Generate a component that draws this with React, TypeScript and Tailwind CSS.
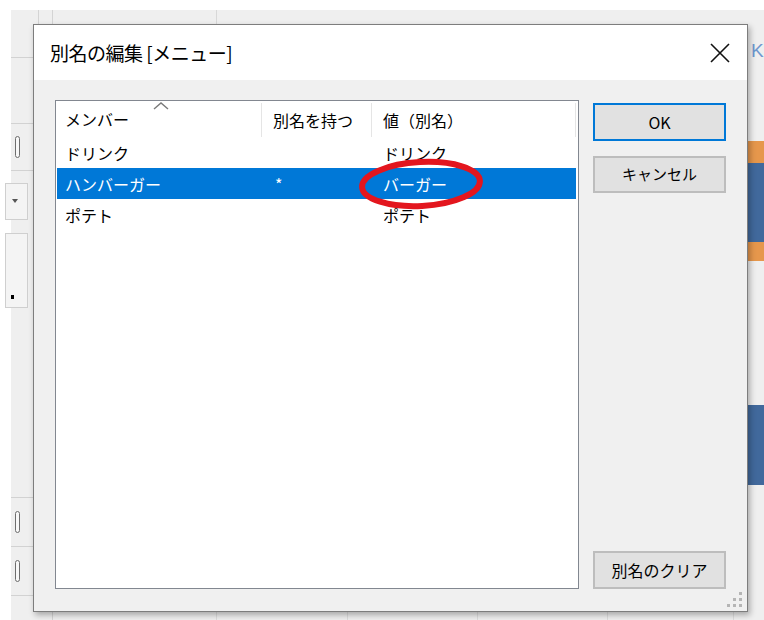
import React from "react";

const rows = [
  { name: "ドリンク", has: "", alias: "ドリンク", sel: false },
  { name: "ハンバーガー", has: "*", alias: "バーガー", sel: true },
  { name: "ポテト", has: "", alias: "ポテト", sel: false },
];

function Handle() {
  return <div className="ml-[4px] w-[5px] h-[22px] rounded-[3px] border border-[#6e6e6e] bg-[#f7f7f7]" />;
}

function LeftPanel() {
  return (
    <div className="w-[22px] flex flex-col">
      <div className="h-[48px] border-b border-[#d2d2d2]" />
      <div className="h-[66px] border-b border-[#d2d2d2]" />
      <div className="h-[47px] border-b border-[#d2d2d2] flex items-center">
        <Handle />
      </div>
      <div className="h-[327px] border-b border-[#d2d2d2] flex flex-col pt-[12px] gap-[13px]">
        <div className="relative -ml-[6px] w-[23px] h-[37px] border border-[#cfcfcf] bg-[#f4f4f4] flex items-center pl-[6px]">
          <svg width="6" height="5" viewBox="0 0 6 5">
            <path d="M0 0 L6 0 L3 4 Z" fill="#555" />
          </svg>
        </div>
        <div className="-ml-[6px] w-[23px] h-[75px] border border-[#cfcfcf] bg-[#f4f4f4] flex flex-col justify-end pb-[8px] pl-[5px]">
          <div className="w-[3px] h-[4px] bg-black" />
        </div>
      </div>
      <div className="h-[49px] border-b border-[#d2d2d2] flex items-center">
        <Handle />
      </div>
      <div className="h-[49px] border-b border-[#d2d2d2] flex items-center">
        <Handle />
      </div>
      <div className="flex-1" />
    </div>
  );
}

function Background() {
  return (
    <div className="w-[764px] h-[620px] flex flex-col bg-white">
      <div className="h-[10px]" />
      <div className="flex-1 flex">
        <div className="w-[11px]" />
        <div className="flex-1 flex bg-[#efefef]">
          <LeftPanel />
          <div className="flex-1 flex flex-col">
            {/* top strip above the dialog */}
            <div className="h-[14px] flex">
              <div className="w-[5px]" />
              <div className="w-[14px] border-l border-[#d4d4d4]" />
              <div className="w-[164px] border-l border-[#d4d4d4]" />
              <div className="flex-1 border-l border-[#d8d8d8]" />
            </div>
            {/* middle row behind the dialog */}
            <div className="flex-1 flex">
              <div className="w-[19px]" />
              <div className="w-[164px] border-l border-[#d4d4d4]" />
              <div className="flex-1 border-l border-[#d8d8d8]" />
              <div className="w-[16px] flex flex-col">
                <div className="h-[117px] pt-[17px] pl-[3px] text-[19px] leading-none text-[#6f98cf] font-['Liberation_Sans',sans-serif]">K</div>
                <div className="h-[22px] bg-[#e6974c]" />
                <div className="h-[79px] bg-[#41699c]" />
                <div className="h-[19px] bg-[#e6974c]" />
                <div className="h-[144px]" />
                <div className="h-[80px] bg-[#41699c]" />
              </div>
            </div>
            {/* bottom strip below the dialog */}
            <div className="h-[8px] flex">
              <div className="w-[19px]" />
              <div className="w-[164px] border-l border-[#d4d4d4]" />
              <div className="w-[131px] border-l border-[#dcdcdc]" />
              <div className="w-[130px] border-l border-[#dcdcdc]" />
              <div className="w-[130px] border-l border-[#dcdcdc]" />
              <div className="w-[126px] border-l border-[#dcdcdc]" />
              <div className="flex-1 border-l border-[#dcdcdc]" />
            </div>
          </div>
        </div>
      </div>
    </div>
  );
}

function ListView() {
  return (
    <div className="relative w-[524px] h-[489px] border border-[#828790] bg-white text-[16px]">
      <div className="relative flex h-[36px] items-center">
        <div className="w-[205px] pl-[9px]">メンバー</div>
        <div className="w-[110px] h-[34px] mt-[2px] border-l border-[#e5e5e5] pl-[11px] flex items-center">別名を持つ</div>
        <div className="w-[204px] h-[34px] mt-[2px] border-l border-[#e5e5e5] pl-[11px] flex items-center">値（別名）</div>
        <div className="w-[3px] h-[34px] mt-[2px] border-l border-[#e5e5e5]" />
        <svg className="absolute left-[97px] top-[1px]" width="16" height="8" viewBox="0 0 16 8">
          <path d="M1 7 L8 1 L15 7" stroke="#7a7a7a" strokeWidth="1.4" fill="none" />
        </svg>
      </div>
      {rows.map((r) => (
        <div
          key={r.name}
          className={
            r.sel
              ? "ml-px w-[519px] h-[31px] flex items-center bg-[#0078d7] text-white"
              : "ml-px w-[519px] h-[31px] flex items-center"
          }
        >
          <div className="w-[204px] pl-[8px]">{r.name}</div>
          <div className="w-[110px] pl-[14px]">{r.has}</div>
          <div className="w-[200px] pl-[12px]">{r.alias}</div>
        </div>
      ))}
      {/* red annotation ellipse drawn over the list */}
      <svg className="absolute left-[302px] top-[57px] -rotate-3" width="126" height="52" viewBox="0 0 126 52">
        <ellipse cx="63" cy="26" rx="59" ry="22" stroke="#e3161e" strokeWidth="6" fill="none" />
      </svg>
    </div>
  );
}

export default function App() {
  return (
    <div className="relative w-[764px] h-[620px] overflow-hidden font-['Noto_Sans_CJK_JP','Noto_Sans',sans-serif] text-black">
      <Background />

      {/* dialog window on top of the application */}
      <div className="absolute left-[33px] top-[24px] w-[715px] h-[588px] flex flex-col border border-[#7d7d7d] shadow-[2px_3px_6px_rgba(0,0,0,0.3)]">
        <div className="h-[55px] flex items-center justify-between pl-[16px] pr-[17px] bg-white">
          <span className="text-[19px] leading-none tracking-[-0.5px]">別名の編集 [メニュー]</span>
          <svg width="20" height="20" viewBox="0 0 20 20">
            <path d="M1 1 L19 19 M19 1 L1 19" stroke="#111" strokeWidth="1.6" />
          </svg>
        </div>
        <div className="relative flex-1 flex bg-[#f0f0f0] pt-[20px] px-[21px] pb-[22px]">
          <ListView />
          <div className="ml-[14px] w-[133px] flex flex-col text-[16px]">
            <button className="mt-[3px] h-[38px] border-2 border-[#0078d7] bg-[#e1e1e1] flex items-center justify-center">
              OK
            </button>
            <button className="mt-[15px] h-[37px] border-2 border-[#bdbdbd] bg-[#e1e1e1] flex items-center justify-center text-[15px]">
              キャンセル
            </button>
            <button className="mt-auto h-[38px] border-2 border-[#bdbdbd] bg-[#e1e1e1] flex items-center justify-center">
              別名のクリア
            </button>
          </div>
          {/* resize grip */}
          <svg className="absolute right-[5px] bottom-[4px]" width="15" height="15" viewBox="0 0 15 15">
            <rect x="12" y="0" width="3" height="3" fill="#b5b5b5" />
            <rect x="6" y="6" width="3" height="3" fill="#b5b5b5" />
            <rect x="12" y="6" width="3" height="3" fill="#b5b5b5" />
            <rect x="0" y="12" width="3" height="3" fill="#b5b5b5" />
            <rect x="6" y="12" width="3" height="3" fill="#b5b5b5" />
            <rect x="12" y="12" width="3" height="3" fill="#b5b5b5" />
          </svg>
        </div>
      </div>
    </div>
  );
}
